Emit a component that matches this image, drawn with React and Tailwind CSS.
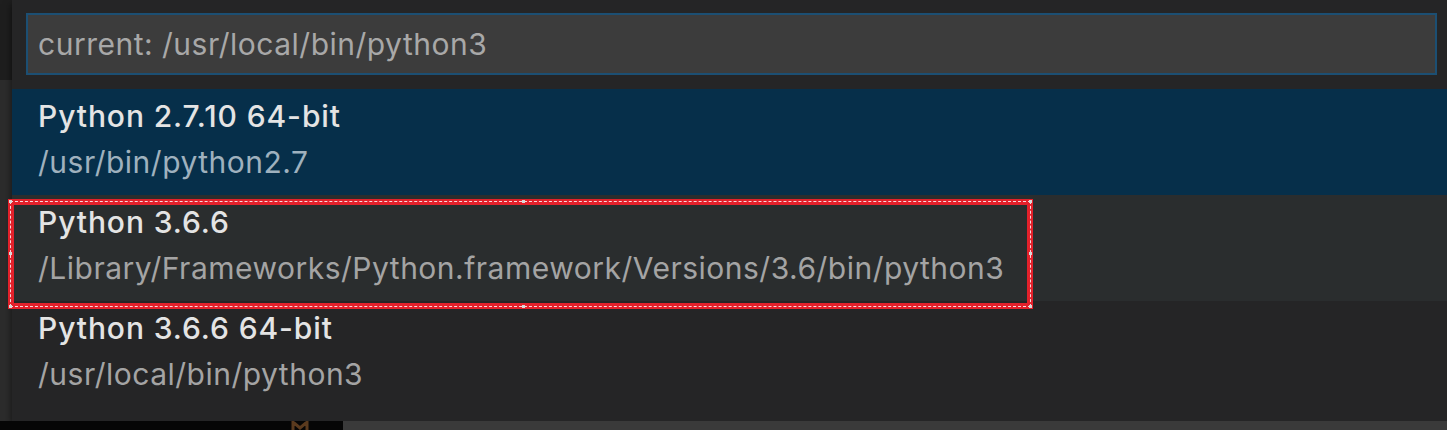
const rows = [
  { title: "Python 2.7.10 64-bit", path: "/usr/bin/python2.7", state: "selected" },
  { title: "Python 3.6.6", path: "/Library/Frameworks/Python.framework/Versions/3.6/bin/python3", state: "hover" },
  { title: "Python 3.6.6 64-bit", path: "/usr/local/bin/python3", state: "normal" },
];

function Handle({ className }) {
  return <span className={"absolute w-[3px] h-[3px] bg-[#d8d8d8] " + className} />;
}

export default function App() {
  return (
    <div
      className="relative w-[1447px] h-[430px] overflow-hidden bg-[#1e1e1e] flex flex-col"
      style={{ fontFamily: "Inter, 'Open Sans', sans-serif" }}
    >
      <div className="flex h-[421px]">
        {/* editor behind the picker */}
        <div className="w-[12px] flex flex-col">
          <div className="h-[80px] bg-[#1e1e1e]" />
          <div className="flex-1 bg-[#2c2c2c]" />
        </div>

        {/* quick pick */}
        <div className="flex-1 bg-[#252526] shadow-[0_4px_8px_rgba(0,0,0,0.6)] flex flex-col">
          <div className="pt-[13px] pl-[14px] pr-[10px] pb-[14px]">
            <div className="h-[62px] border-2 border-[#1c4f73] bg-[#3c3c3c] flex items-center pl-[10px]">
              <span className="text-[30px] text-[#a8a8a8] tracking-[0.5px]">current: /usr/local/bin/python3</span>
            </div>
          </div>
          {rows.map((row) => (
            <div
              key={row.title}
              className={
                "h-[106px] pl-[26px] pt-[6px] flex flex-col " +
                (row.state === "selected" ? "bg-[#062f4a]" : row.state === "hover" ? "bg-[#2a2d2e]" : "bg-[#252526]")
              }
            >
              <div className="text-[30px] leading-[42px] font-medium text-[#e4e4e4] tracking-[0.9px]">{row.title}</div>
              <div
                className={
                  "text-[30px] leading-[50px] tracking-[0.5px] " +
                  (row.state === "selected" ? "text-[#9fb1be]" : "text-[#a4a4a4]")
                }
              >
                {row.path}
              </div>
            </div>
          ))}
        </div>
      </div>

      {/* strip of window below */}
      <div className="flex-1 flex">
        <div className="w-[343px] bg-[#060606] flex">
          <svg className="ml-[290px]" width="20" height="9" viewBox="0 0 20 9">
            <path d="M3 0v9M3 1l7 6 7-6M17 0v9" stroke="#5a3a1e" strokeWidth="3" fill="none" />
          </svg>
        </div>
        <div className="flex-1 bg-[#3a3a3a]" />
      </div>

      {/* red annotation frame */}
      <div className="absolute left-[8px] top-[199px] w-[1025px] h-[110px] border-[6px] border-[#e3212b]">
        <div className="absolute -inset-[4px] border border-dashed border-[#f8dadd]" />
        <Handle className="-left-[5px] -top-[5px]" />
        <Handle className="left-[508px] -top-[5px]" />
        <Handle className="-right-[5px] -top-[5px]" />
        <Handle className="-left-[5px] top-[47px]" />
        <Handle className="-right-[5px] top-[47px]" />
        <Handle className="-left-[5px] -bottom-[5px]" />
        <Handle className="left-[508px] -bottom-[5px]" />
        <Handle className="-right-[5px] -bottom-[5px]" />
      </div>
    </div>
  );
}
